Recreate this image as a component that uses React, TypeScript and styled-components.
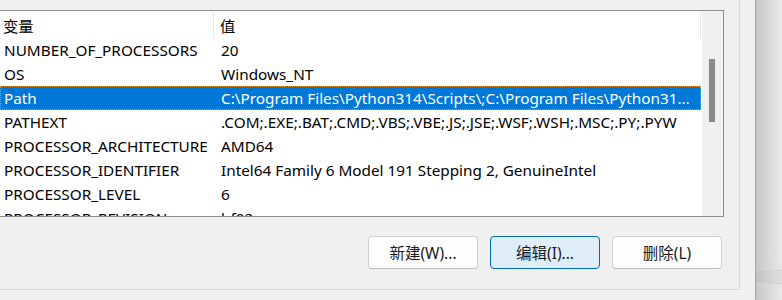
import styled, { createGlobalStyle } from 'styled-components';

const GlobalStyle = createGlobalStyle`
  body {
    margin: 0;
    background: #f0f0f0;
    font-family: 'Noto Sans', 'Noto Sans CJK SC', sans-serif;
    font-size: 15.3px;
    color: #000;
  }
`;

const Screen = styled.div`
  display: flex;
  width: 782px;
  height: 300px;
  overflow: hidden;
`;

const Dialog = styled.div`
  width: 755px;
  flex-shrink: 0;
  background: #f0f0f0;
  border-right: 1px solid #a6a6a6;
`;

const Backdrop = styled.div`
  flex: 1;
  display: flex;
  flex-direction: column;
  background: linear-gradient(to right, #c8c8c8, #e8e8e8);
`;

const BackdropBand = styled.div`
  margin-top: 270px;
  height: 12px;
  border-top: 1px solid #d2d2d2;
  border-bottom: 1px solid #d2d2d2;
  background: rgba(0, 0, 0, 0.03);
`;

const GroupBox = styled.div`
  box-sizing: border-box;
  width: 740px;
  height: 290px;
  padding: 10px 17px 0 0;
  border-right: 1px solid #d8d8d8;
  border-bottom: 1px solid #d8d8d8;
  display: flex;
  flex-direction: column;
`;

const ListView = styled.div`
  box-sizing: border-box;
  width: 724px;
  height: 207px;
  display: flex;
  background: #fff;
  border: 1px solid #8d8d93;
  border-left: none;
`;

const Table = styled.div`
  width: 702px;
  flex-shrink: 0;
  overflow: hidden;
`;

const HeaderRow = styled.div`
  display: grid;
  grid-template-columns: 214px 487px 1px;
  height: 27px;
  padding-top: 1px;
  box-sizing: border-box;
`;

const HeaderCell = styled.div<{ $pad: number }>`
  display: flex;
  align-items: center;
  padding-left: ${(p) => p.$pad}px;
  border-right: 1px solid #e5e5e5;
  white-space: nowrap;
`;

const Row = styled.div<{ $selected?: boolean }>`
  box-sizing: border-box;
  display: grid;
  grid-template-columns: 213px 486px;
  width: 701px;
  height: 24px;
  align-items: center;
  white-space: nowrap;
  background: ${(p) => (p.$selected ? '#0078d7' : 'transparent')};
  color: ${(p) => (p.$selected ? '#fff' : '#000')};
  border: 1px ${(p) => (p.$selected ? 'dotted #f0932b' : 'solid transparent')};
`;

const NameCell = styled.div`
  padding-left: 3px;
  white-space: nowrap;
`;

const ValueCell = styled.div`
  padding: 0 4px 0 7px;
  overflow: hidden;
  white-space: nowrap;
  text-overflow: ellipsis;
`;

const ScrollTrack = styled.div`
  width: 21px;
  flex-shrink: 0;
  background: #f0f0f0;
  padding-top: 48px;
  box-sizing: border-box;
`;

const ScrollThumb = styled.div`
  width: 6px;
  height: 63px;
  margin-left: 7px;
  background: #8a8a8a;
`;

const ButtonRow = styled.div`
  display: flex;
  justify-content: flex-end;
  gap: 12px;
  margin-top: 19px;
`;

const Button = styled.button<{ $primary?: boolean }>`
  box-sizing: border-box;
  width: 110px;
  height: 33px;
  border-radius: 4px;
  font-family: inherit;
  font-size: 15.5px;
  color: #1a1a1a;
  padding: 0;
  background: ${(p) => (p.$primary ? '#e0eef9' : '#fdfdfd')};
  border: 1px solid ${(p) => (p.$primary ? '#0067c0' : '#d0d0d0')};
  border-bottom-color: ${(p) => (p.$primary ? '#0067c0' : '#bdbdbd')};
`;

const rows: [string, string][] = [
  ['NUMBER_OF_PROCESSORS', '20'],
  ['OS', 'Windows_NT'],
  ['Path', 'C:\\Program Files\\Python314\\Scripts\\;C:\\Program Files\\Python314\\;C:\\Windows\\system32'],
  ['PATHEXT', '.COM;.EXE;.BAT;.CMD;.VBS;.VBE;.JS;.JSE;.WSF;.WSH;.MSC;.PY;.PYW'],
  ['PROCESSOR_ARCHITECTURE', 'AMD64'],
  ['PROCESSOR_IDENTIFIER', 'Intel64 Family 6 Model 191 Stepping 2, GenuineIntel'],
  ['PROCESSOR_LEVEL', '6'],
  ['PROCESSOR_REVISION', 'bf02'],
];

export default function App() {
  return (
    <Screen>
      <GlobalStyle />
      <Dialog>
        <GroupBox>
          <ListView>
            <Table>
              <HeaderRow>
                <HeaderCell $pad={3}>变量</HeaderCell>
                <HeaderCell $pad={6}>值</HeaderCell>
              </HeaderRow>
              {rows.map(([name, value]) => (
                <Row key={name} $selected={name === 'Path'}>
                  <NameCell>{name}</NameCell>
                  <ValueCell>{value}</ValueCell>
                </Row>
              ))}
            </Table>
            <ScrollTrack>
              <ScrollThumb />
            </ScrollTrack>
          </ListView>
          <ButtonRow>
            <Button>新建(W)...</Button>
            <Button $primary>编辑(I)...</Button>
            <Button>删除(L)</Button>
          </ButtonRow>
        </GroupBox>
      </Dialog>
      <Backdrop>
        <BackdropBand />
      </Backdrop>
    </Screen>
  );
}
